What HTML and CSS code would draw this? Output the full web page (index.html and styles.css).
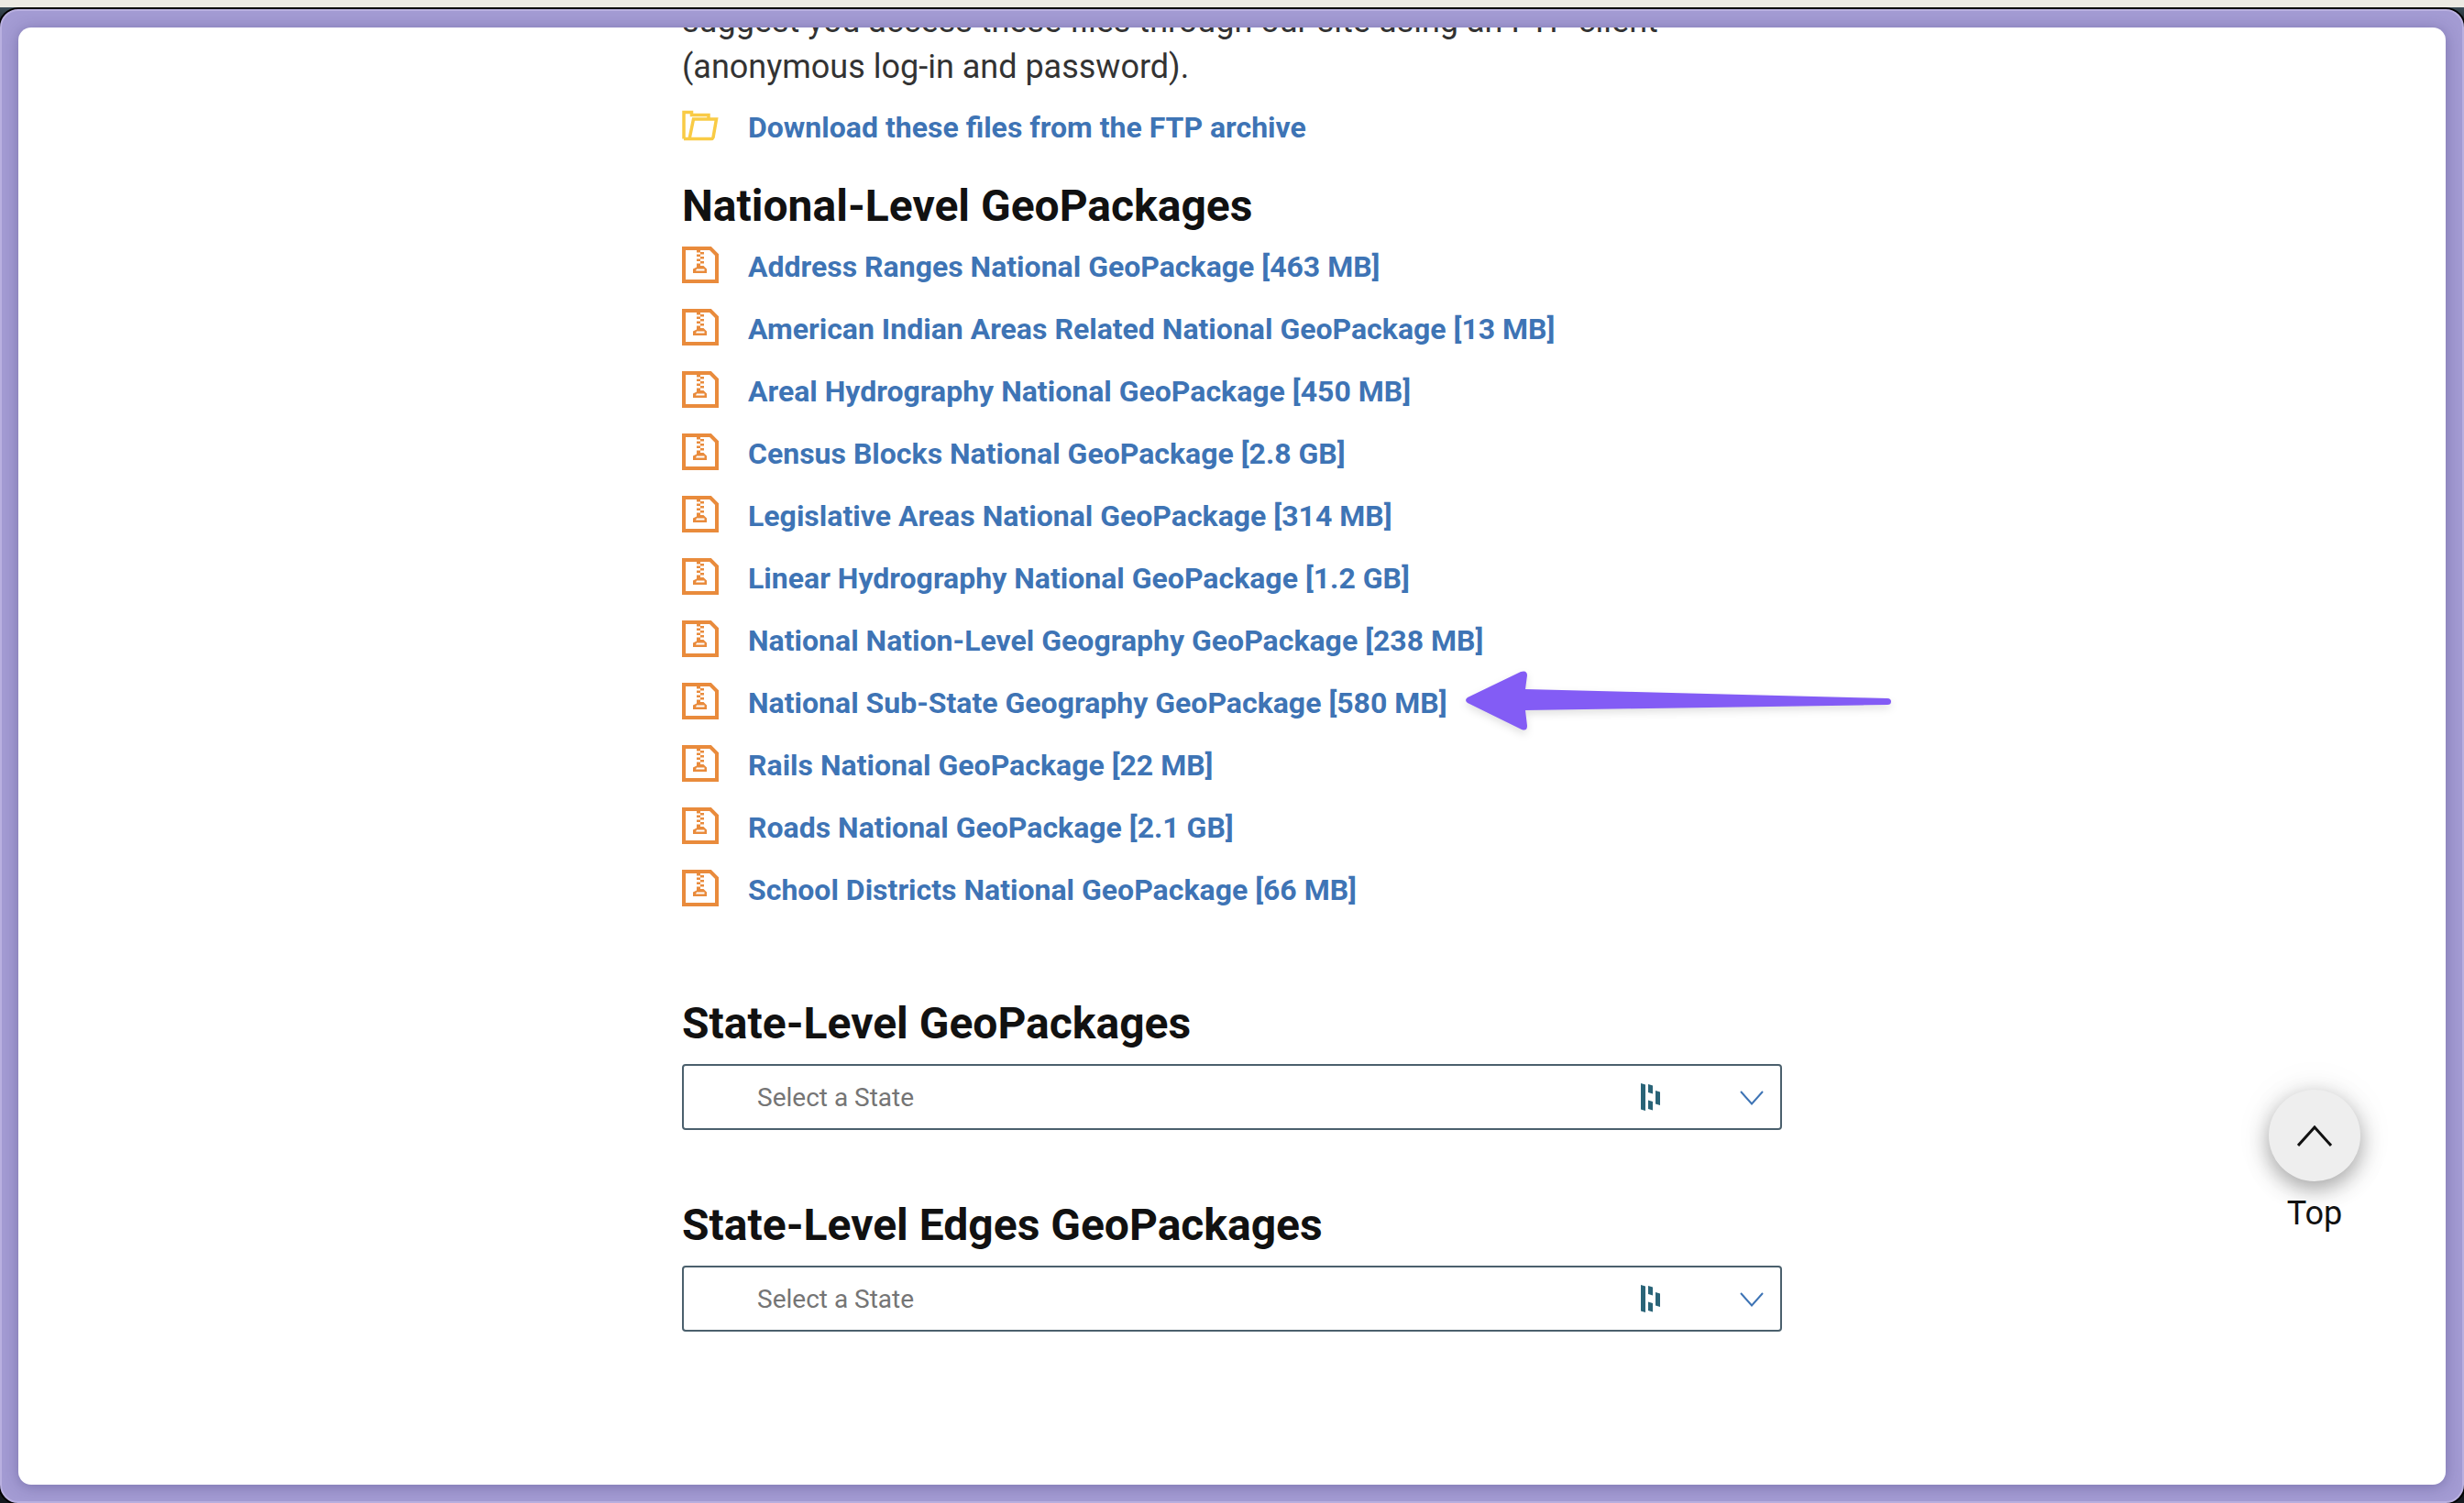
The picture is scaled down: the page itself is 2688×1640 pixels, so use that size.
FILE: index.html
```html
<!DOCTYPE html>
<html lang="en">
<head>
<meta charset="utf-8">
<title>GeoPackages</title>
<link rel="stylesheet" href="styles.css">
</head>
<body>
<svg width="0" height="0" class="sprite" aria-hidden="true">
  <symbol id="zip" viewBox="0 0 40 40">
    <path d="M2 2H31L38 9V38H2Z" fill="none" stroke="currentColor" stroke-width="4"/>
    <path d="M16 4h4v2.500h-4ZM20 6h4v2.500h-4ZM16 8.500h4v2.500h-4ZM20 11h4v2.500h-4ZM16 13.500h4v2.500h-4ZM20 16h4v2.500h-4ZM16 18.500h4v2.500h-4ZM16 21h7.500l3.500 3.500V29H12V24.500L16 22.500ZM16 24.500L15 26.500H24.500V24.500Z" fill="currentColor" fill-rule="evenodd"/>
  </symbol>
  <symbol id="mark" viewBox="0 0 22 30">
    <path d="M0 0l5 1.500V30l-5-1.500ZM8 1l5 1.500v9L8 10ZM8 18.500l5 1.500v9.500L8 28ZM16 8l5 1.500V24l-5-1.500Z" fill="currentColor"/>
  </symbol>
  <symbol id="chevron" viewBox="0 0 26 16">
    <path d="M1 1L13 14.500L25 1" fill="none" stroke="currentColor" stroke-width="2"/>
  </symbol>
</svg>
<div class="window">
  <main class="page">
    <div class="content">
      <p class="intro">suggest you access these files through our site using an FTP client (anonymous log-in and password).</p>
      <a class="file" href="#ftp">
        <svg class="icon folder" viewBox="0 0 40 40"><path d="M2 34.500V5.500H10.500V8.500H29V12M8 35L12.500 13H37.500L34 33Q33.500 34.500 32 34.500H2" fill="none" stroke="currentColor" stroke-width="3.500"/></svg>
        <span>Download these files from the FTP archive</span>
      </a>
      <h2>National-Level GeoPackages</h2>
      <ul class="files">
        <li><a class="file" href="#1"><svg class="icon"><use href="#zip"/></svg><span>Address Ranges National GeoPackage [463 MB]</span></a></li>
        <li><a class="file" href="#2"><svg class="icon"><use href="#zip"/></svg><span>American Indian Areas Related National GeoPackage [13 MB]</span></a></li>
        <li><a class="file" href="#3"><svg class="icon"><use href="#zip"/></svg><span>Areal Hydrography National GeoPackage [450 MB]</span></a></li>
        <li><a class="file" href="#4"><svg class="icon"><use href="#zip"/></svg><span>Census Blocks National GeoPackage [2.8 GB]</span></a></li>
        <li><a class="file" href="#5"><svg class="icon"><use href="#zip"/></svg><span>Legislative Areas National GeoPackage [314 MB]</span></a></li>
        <li><a class="file" href="#6"><svg class="icon"><use href="#zip"/></svg><span>Linear Hydrography National GeoPackage [1.2 GB]</span></a></li>
        <li><a class="file" href="#7"><svg class="icon"><use href="#zip"/></svg><span>National Nation-Level Geography GeoPackage [238 MB]</span></a></li>
        <li class="marked"><a class="file" href="#8"><svg class="icon"><use href="#zip"/></svg><span>National Sub-State Geography GeoPackage [580 MB]</span></a>
          <svg class="arrow" viewBox="0 0 466 68" aria-hidden="true"><path d="M3 30L61 2Q68 0 68 6L66 21L461 31Q465 31 465 34.500Q465 38 461 38L66 44L68 61Q68 67 62 65L3 36Q-1 33 3 30Z" fill="#835cf5"/></svg>
        </li>
        <li><a class="file" href="#9"><svg class="icon"><use href="#zip"/></svg><span>Rails National GeoPackage [22 MB]</span></a></li>
        <li><a class="file" href="#10"><svg class="icon"><use href="#zip"/></svg><span>Roads National GeoPackage [2.1 GB]</span></a></li>
        <li><a class="file" href="#11"><svg class="icon"><use href="#zip"/></svg><span>School Districts National GeoPackage [66 MB]</span></a></li>
      </ul>
      <section class="picker">
        <h2><label for="state">State-Level GeoPackages</label></h2>
        <div class="field">
          <select id="state"><option>Select a State</option></select>
          <svg class="mark"><use href="#mark"/></svg>
          <svg class="chevron"><use href="#chevron"/></svg>
        </div>
      </section>
      <section class="picker">
        <h2><label for="edges">State-Level Edges GeoPackages</label></h2>
        <div class="field">
          <select id="edges"><option>Select a State</option></select>
          <svg class="mark"><use href="#mark"/></svg>
          <svg class="chevron"><use href="#chevron"/></svg>
        </div>
      </section>
    </div>
    <button class="top" type="button">
      <span class="disc"><svg viewBox="0 0 38 24"><path d="M1 23L19 3L37 23" fill="none" stroke="currentColor" stroke-width="3"/></svg></span>
      Top
    </button>
  </main>
</div>
</body>
</html>
```

FILE: styles.css
```css
* { box-sizing: border-box; }

body {
  margin: 0;
  min-height: 100vh;
  display: flex;
  flex-direction: column;
  border-top: 8px solid #eceae3;
  background: linear-gradient(#4a5f6b, #14191f 30px);
  font-family: Roboto, "Liberation Sans", sans-serif;
  color: #111;
}

.sprite { position: absolute; }

.window {
  flex: 1;
  display: flex;
  margin-top: 2px;
  padding: 18px;
  border: 2px solid #b9b0e0;
  border-radius: 20px;
  background: #a39bd3;
  box-shadow: 0 0 0 2px #000;
}

.page {
  flex: 1;
  position: relative;
  overflow: hidden;
  border-radius: 14px;
  background: #fff;
  box-shadow: 0 2px 16px rgba(50, 40, 100, .35);
}

.content {
  width: 1200px;
  max-width: 100%;
  margin: -32px auto 0;
}

.intro {
  width: 1120px;
  max-width: 100%;
  margin: 0 0 7px;
  font-size: 36px;
  line-height: 50px;
  color: #333;
}

.file {
  display: flex;
  align-items: center;
  gap: 32px;
  font-size: 32px;
  line-height: 68px;
  font-weight: 700;
  color: #3e74b5;
  text-decoration: none;
}

.icon {
  width: 40px;
  height: 40px;
  margin-bottom: 4px;
  color: #e98b3c;
}

.folder { color: #f9cb45; }

h2 {
  margin: 24px 0 4px;
  font-size: 48px;
  line-height: 56px;
  font-weight: 700;
}

.files {
  margin: 0 0 84px;
  padding: 0;
  list-style: none;
}

.marked { position: relative; }

.arrow {
  position: absolute;
  left: 854px;
  top: -2px;
  width: 466px;
  height: 68px;
  overflow: visible;
  filter: drop-shadow(0 4px 4px rgba(0, 0, 0, .12));
}

.picker { margin-bottom: 76px; }
.picker h2 { margin: 0 0 16px; }

.field { position: relative; }

.field select {
  display: block;
  width: 100%;
  height: 72px;
  padding: 0 80px;
  appearance: none;
  border: 2px solid #4b606d;
  border-radius: 4px;
  background: #fff;
  font: 28px Roboto, sans-serif;
  color: #757575;
}

.mark, .chevron {
  position: absolute;
  pointer-events: none;
}

.mark {
  right: 132px;
  top: 21px;
  width: 22px;
  height: 30px;
  color: #2a6478;
}

.chevron {
  right: 20px;
  top: 29px;
  width: 26px;
  height: 16px;
  color: #3e74b5;
}

.top {
  position: absolute;
  right: 93px;
  top: 1159px;
  display: flex;
  flex-direction: column;
  align-items: center;
  gap: 12px;
  padding: 0;
  border: 0;
  background: none;
  font: 36px/46px Roboto, sans-serif;
  color: #111;
}

.disc {
  display: grid;
  place-items: center;
  width: 100px;
  height: 100px;
  border-radius: 50%;
  background: #eee;
  box-shadow: 0 8px 24px rgba(0, 0, 0, .35), 0 0 48px rgba(0, 0, 0, .06);
}

.disc svg { width: 38px; height: 24px; }
```
